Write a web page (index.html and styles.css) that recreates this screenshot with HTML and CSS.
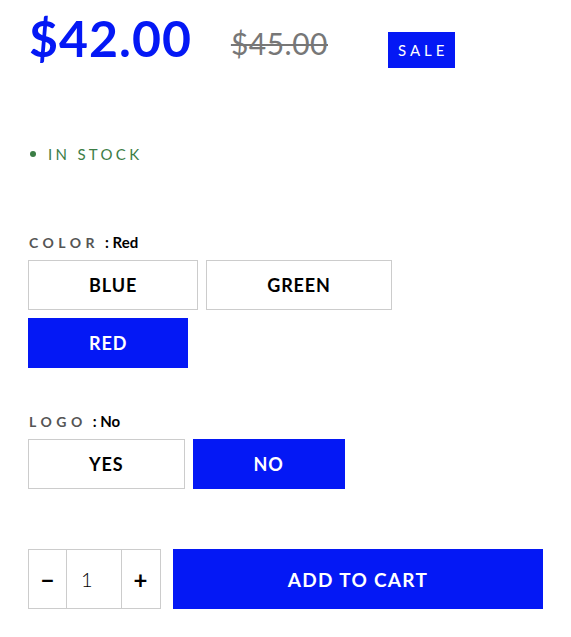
FILE: index.html
```html
<!DOCTYPE html>
<html lang="en">
<head>
<meta charset="utf-8">
<title>Product</title>
<link rel="stylesheet" href="styles.css">
</head>
<body>
<div class="product">
  <div class="price-row">
    <span class="price">$42.00</span>
    <span class="compare">$45.00</span>
    <span class="badge">SALE</span>
  </div>

  <div class="stock"><span class="dot"></span>IN STOCK</div>

  <div class="option option-color">
    <div class="opt-label"><span class="opt-name">COLOR</span><span class="opt-value">: Red</span></div>
    <div class="choices">
      <button class="choice">BLUE</button>
      <button class="choice">GREEN</button>
      <button class="choice is-active">RED</button>
    </div>
  </div>

  <div class="option option-logo">
    <div class="opt-label"><span class="opt-name">LOGO</span><span class="opt-value">: No</span></div>
    <div class="choices">
      <button class="choice">YES</button>
      <button class="choice is-active">NO</button>
    </div>
  </div>

  <div class="cart-row">
    <div class="qty">
      <button class="qty-btn">&minus;</button>
      <span class="qty-val">1</span>
      <button class="qty-btn">+</button>
    </div>
    <button class="add">ADD TO CART</button>
  </div>
</div>
</body>
</html>
```

FILE: styles.css
```css
* { box-sizing: border-box; }
body {
  margin: 0;
  background: #fff;
  font-family: "Lato", "Liberation Sans", sans-serif;
  color: #000;
}
.product {
  padding: 0 28px;
}
.price-row {
  display: flex;
  align-items: flex-start;
  padding-top: 8px;
}
.price {
  font-size: 50px;
  font-weight: 700;
  letter-spacing: 1px;
  color: #0418f5;
  line-height: 60px;
  margin-left: 1px;
}
.compare {
  font-size: 30px;
  letter-spacing: 0.5px;
  color: #777;
  text-decoration: line-through;
  text-decoration-thickness: 2px;
  line-height: 60px;
  margin-left: 39px;
  margin-top: 5px;
}
.badge {
  margin-left: 60px;
  margin-top: 24px;
  background: #0418f5;
  color: #fff;
  font-size: 15px;
  letter-spacing: 4px;
  height: 36px;
  line-height: 36px;
  padding: 0 7px 0 10px;
}
.stock {
  margin-top: 71px;
  display: flex;
  align-items: center;
  font-size: 15px;
  letter-spacing: 3.3px;
  color: #3b7d45;
  line-height: 20px;
}
.dot {
  width: 6px;
  height: 6px;
  border-radius: 50%;
  background: #3b7d45;
  margin: 0 12px 0 2px;
}
.option-color { margin-top: 69px; }
.option-logo { margin-top: 44px; }
.opt-label {
  display: flex;
  align-items: baseline;
  line-height: 18px;
  margin-bottom: 8px;
}
.opt-name {
  font-size: 14px;
  letter-spacing: 4.5px;
  color: #555;
  font-weight: 700;
  margin-left: 1px;
}
.opt-value {
  font-size: 15px;
  font-weight: 700;
  margin-left: 6px;
}
.choices {
  display: flex;
  flex-wrap: wrap;
  gap: 8px;
}
.choice {
  font-family: inherit;
  height: 50px;
  padding: 0 60px;
  background: #fff;
  border: 1px solid #ccc;
  font-size: 18px;
  font-weight: 700;
  letter-spacing: 0.9px;
  color: #000;
}
.choice.is-active {
  background: #0418f5;
  border-color: #0418f5;
  color: #fff;
}
.cart-row {
  margin-top: 60px;
  display: flex;
  gap: 12px;
}
.qty {
  display: flex;
  border: 1px solid #ccc;
  height: 60px;
  width: 133px;
}
.qty-btn {
  font-family: inherit;
  background: #fff;
  border: 0;
  width: 37px;
  font-size: 24px;
  font-weight: 700;
  color: #000;
  padding: 0;
}
.qty-val {
  width: 56px;
  border-left: 1px solid #ccc;
  border-right: 1px solid #ccc;
  display: flex;
  align-items: center;
  padding-left: 14px;
  font-size: 20px;
  font-weight: 300;
}
.add {
  flex: 1;
  font-family: inherit;
  height: 60px;
  background: #0418f5;
  border: 0;
  color: #fff;
  font-size: 19px;
  font-weight: 700;
  letter-spacing: 1.3px;
}
```
